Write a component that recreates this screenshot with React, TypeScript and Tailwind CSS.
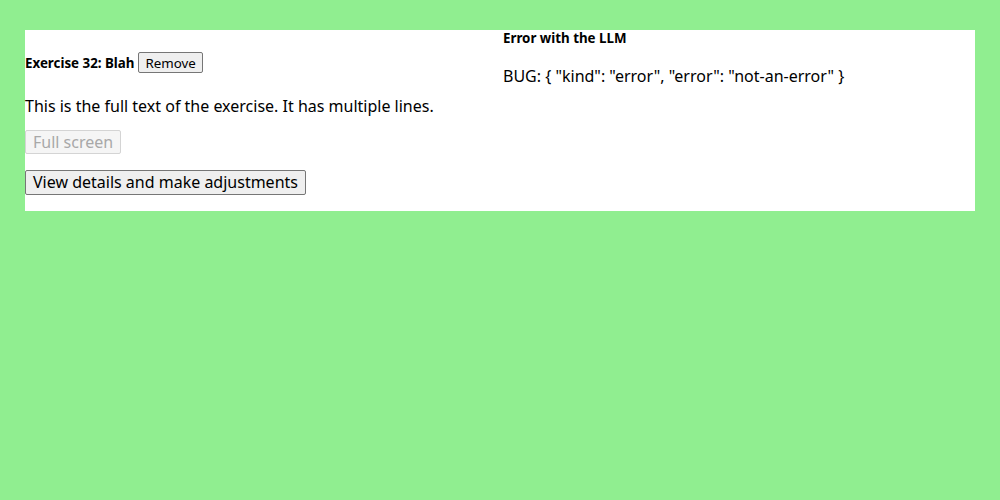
export default function App() {
  return (
    <div className="min-h-screen bg-[#90ee90] pt-[30px] px-[25px] font-['Noto_Sans',sans-serif] text-black">
      <div className="bg-white grid grid-cols-[478px_1fr]">
        <div className="flex flex-col items-start pb-4">
          <div className="mt-[22px] flex items-center h-[21px]">
            <h5 className="text-[13.33px] font-bold leading-[18px]">Exercise 32: Blah</h5>
            <button className="ml-[4px] h-[21px] px-[6px] text-[13.33px] leading-[18px] bg-[#efefef] border border-[#767676] rounded-[2px]">
              Remove
            </button>
          </div>
          <p className="mt-[22px] text-base leading-[22px]">
            This is the full text of the exercise. It has multiple lines.
          </p>
          <button
            disabled
            className="mt-[13px] h-[24px] px-[7px] text-base leading-[22px] bg-[#f5f5f5] text-[#a8a8a8] border border-[#d4d4d4] rounded-[2px]"
          >
            Full screen
          </button>
          <button className="mt-[16px] h-[25px] px-[7px] text-base leading-[21px] bg-[#efefef] border border-[#767676] rounded-[2px]">
            View details and make adjustments
          </button>
        </div>
        <div className="flex flex-col">
          <h5 className="text-[13.33px] font-bold leading-[18px] mt-[-1px]">Error with the LLM</h5>
          <div className="mt-[18px] text-base leading-[22px]">
            BUG: {'{ "kind": "error", "error": "not-an-error" }'}
          </div>
        </div>
      </div>
    </div>
  );
}
